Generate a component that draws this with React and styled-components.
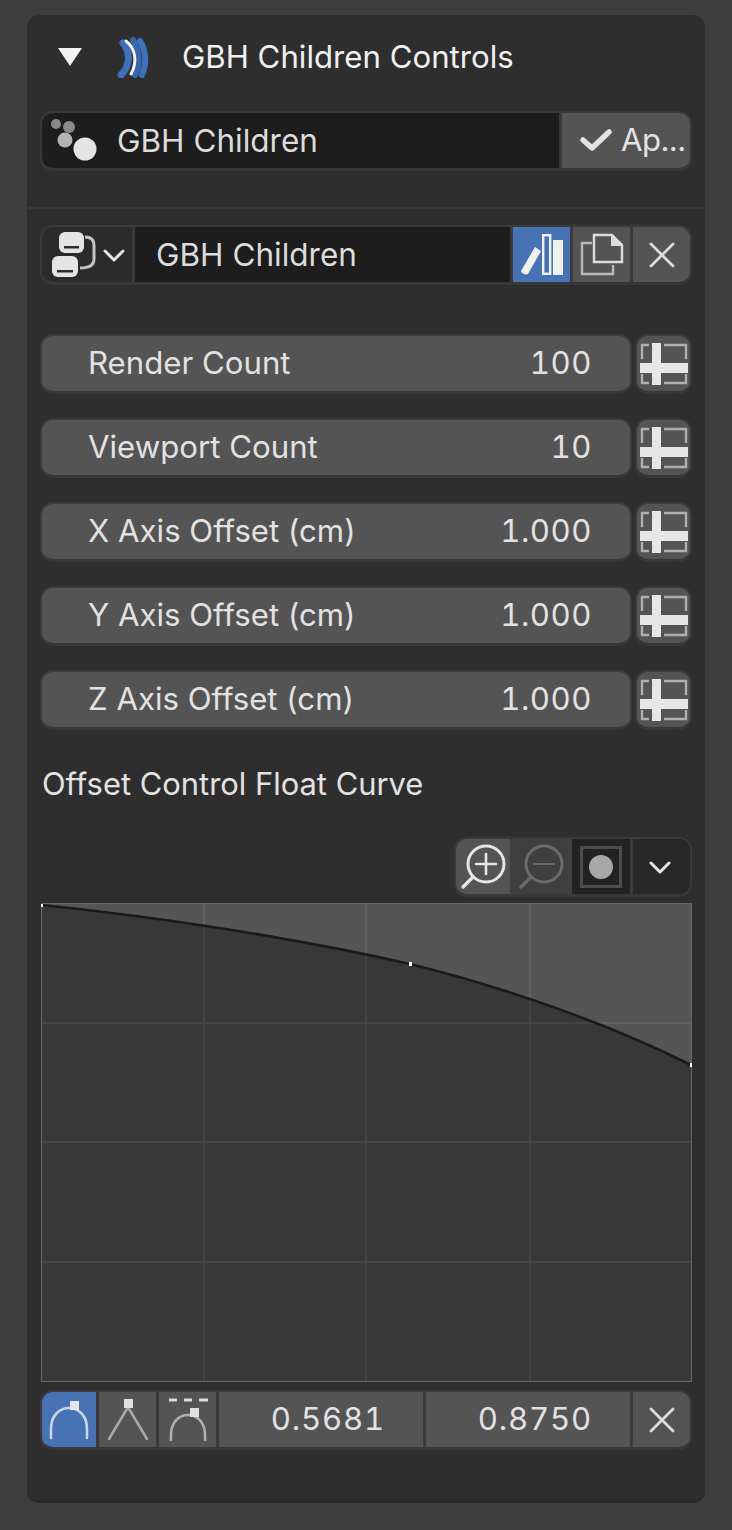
import React from "react";
import styled, { createGlobalStyle } from "styled-components";

const GlobalStyle = createGlobalStyle`
  html, body { margin: 0; padding: 0; background: #3d3d3d; }
  body { width: 732px; height: 1530px; overflow: hidden; font-family: Inter, "Liberation Sans", sans-serif; }
`;

const Page = styled.div`
  width: 732px;
  height: 1530px;
  padding: 15px 27px 0;
  box-sizing: border-box;
`;

const Panel = styled.div`
  width: 678px;
  height: 1488px;
  box-sizing: border-box;
  background: #2e2e2e;
  border-radius: 12px;
  border-bottom: 3px solid #292929;
`;

const Header = styled.div`
  height: 96px;
  display: flex;
  align-items: center;
  padding: 0 0 12px 29px;
  box-sizing: border-box;
  color: #f0f0f0;
  font-size: 31.2px;
`;

const LogoSlot = styled.span`
  display: flex;
  margin-left: 32px;
`;

const HeaderTitle = styled.span`
  margin-left: 32px;
`;

const Section = styled.div`
  padding: 0 13px;
`;

const FieldRow = styled.div`
  display: flex;
  height: 60px;
  gap: 3px;
  box-sizing: border-box;
  background: #3a3a3a;
  border: 2px solid #3a3a3a;
  border-bottom: 3px solid #383838;
  border-radius: 13px;
  overflow: hidden;
`;

const TextField = styled.div`
  flex: 1;
  display: flex;
  align-items: center;
  gap: ${({ $gap }) => $gap ?? 0}px;
  background: #1d1d1d;
  color: #dcdcdc;
  font-size: 31.5px;
  padding: 0 0 1px ${({ $pad }) => $pad}px;
  box-sizing: border-box;
`;

const ApplyButton = styled.div`
  width: 128px;
  display: flex;
  align-items: center;
  gap: 9px;
  padding: 0 0 1px 18px;
  box-sizing: border-box;
  background: #545454;
  color: #e2e2e2;
  font-size: 31.2px;
  letter-spacing: -0.6px;
`;

const Divider = styled.div`
  height: 2px;
  background: #3a3a3a;
  margin: 36px 0 16px;
`;

const SelectorButton = styled.div`
  width: 90px;
  display: flex;
  align-items: center;
  padding-left: 10px;
  gap: 5px;
  box-sizing: border-box;
  background: #2b2b2b;
`;

const IconButton = styled.div`
  width: ${({ $w }) => $w ?? 57}px;
  display: flex;
  align-items: center;
  justify-content: center;
  box-sizing: border-box;
  background: ${({ $active }) => ($active ? "#4772b3" : "#545454")};
`;

const Sliders = styled.div`
  display: flex;
  flex-direction: column;
  gap: 24px;
  margin-top: 49px;
`;

const SliderRow = styled.div`
  display: flex;
  height: 60px;
  gap: 3px;
`;

const Slider = styled.div`
  flex: 1;
  display: flex;
  align-items: center;
  justify-content: space-between;
  padding: 0 38px 2px 46px;
  box-sizing: border-box;
  background: #545454;
  color: #e2e2e2;
  font-size: 31.2px;
  border: 2px solid #3a3a3a;
  border-bottom: 3px solid #383838;
  border-radius: 13px;
`;

const SliderValue = styled.span`
  font-variant-numeric: tabular-nums;
  letter-spacing: 0.5px;
`;

const DecoButton = styled.div`
  width: 57px;
  display: flex;
  align-items: center;
  justify-content: center;
  box-sizing: border-box;
  background: #545454;
  border: 2px solid #3a3a3a;
  border-bottom: 3px solid #383838;
  border-radius: 13px;
`;

const CurveLabel = styled.div`
  margin-top: 35px;
  padding-left: 2px;
  height: 37px;
  line-height: 37px;
  color: #e2e2e2;
  font-size: 30.9px;
`;

const CurveToolbar = styled.div`
  display: flex;
  justify-content: flex-end;
  margin-top: 35px;
`;

const ToolGroup = styled.div`
  display: flex;
  height: 60px;
  width: 238px;
  box-sizing: border-box;
  border: 2px solid #3a3a3a;
  border-bottom: 3px solid #383838;
  border-radius: 13px;
  overflow: hidden;
  background: #2a2a2a;
`;

const ToolButton = styled.div`
  flex: ${({ $w }) => `0 0 ${$w}px`};
  display: flex;
  align-items: center;
  justify-content: center;
  box-sizing: border-box;
  background: ${({ $bg }) => $bg};
  ${({ $split }) => $split && "border-left: 3px solid #3a3a3a; padding-right: 3px;"}
`;

const CurveBox = styled.div`
  margin: 6px 0 0 1px;
  width: 651px;
  height: 479px;
  line-height: 0;
`;

const BottomRow = styled(FieldRow)`
  margin-top: 8px;
`;

const NumberField = styled.div`
  width: 204px;
  display: flex;
  align-items: center;
  justify-content: center;
  padding: 0 0 1px 14px;
  box-sizing: border-box;
  background: #545454;
  color: #e2e2e2;
  font-size: 31.2px;
  font-variant-numeric: tabular-nums;
  letter-spacing: 0.8px;
`;

const ArrowDown = () => (
  <svg width="28" height="24" viewBox="0 0 28 24">
    <path d="M2 3h24L14 21z" fill="#f2f2f2" />
  </svg>
);

const AddonLogo = () => (
  <svg width="34" height="42" viewBox="0 0 34 42" fill="none" strokeLinecap="round">
    <path d="M24 5c6 9 7 23 2 34" stroke="#3f70b8" strokeWidth="6" />
    <path d="M17 4c6 9 8 24 2 35" stroke="#3668ae" strokeWidth="6" />
    <path d="M7 7c7 8 8 22 -2 32" stroke="#3f70b8" strokeWidth="7" />
    <path d="M10 5c9 7 12 20 5 33" stroke="#f2f2f2" strokeWidth="3" />
  </svg>
);

const ParticlesIcon = () => (
  <svg width="46" height="42" viewBox="0 0 46 42">
    <circle cx="5" cy="5" r="5" fill="#8a8a8a" />
    <circle cx="18" cy="8" r="6" fill="#8a8a8a" />
    <circle cx="14" cy="21" r="7.5" fill="#b4b4b4" />
    <circle cx="34" cy="30" r="11.5" fill="#e4e4e4" />
  </svg>
);

const CheckIcon = () => (
  <svg width="32" height="24" viewBox="0 0 32 24" fill="none">
    <path d="M3 12l9 8L29 4" stroke="#e2e2e2" strokeWidth="5.5" strokeLinecap="round" strokeLinejoin="round" />
  </svg>
);

const NodeTreeIcon = () => (
  <svg width="46" height="46" viewBox="0 0 46 46" fill="none">
    <rect x="7" y="0" width="25" height="21" rx="6" fill="#e4e4e4" />
    <rect x="12" y="14" width="15" height="2.5" fill="#2b2b2b" />
    <rect x="0" y="24" width="26" height="21" rx="6" fill="#e4e4e4" />
    <rect x="5" y="38" width="16" height="2.5" fill="#2b2b2b" />
    <path d="M33 5c6 0 9 3 9 8v14c0 6-4 9-14 9" stroke="#c4c4c4" strokeWidth="3" />
  </svg>
);

const Chevron = ({ color = "#e2e2e2" }) => (
  <svg width="22" height="14" viewBox="0 0 22 14" fill="none">
    <path d="M2 3l9 9 9-9" stroke={color} strokeWidth="3" strokeLinecap="round" strokeLinejoin="round" />
  </svg>
);

const BooksIcon = () => (
  <svg width="44" height="42" viewBox="0 0 44 42">
    <path d="M1 37L15 13l6 4-13 23c-2 1-6 0-7-3z" fill="#f0f0f0" />
    <rect x="23.2" y="1.2" width="7" height="38.6" fill="none" stroke="#f0f0f0" strokeWidth="2.4" />
    <rect x="33" y="6" width="10" height="35" fill="#f0f0f0" />
  </svg>
);

const CopyIcon = () => (
  <svg width="44" height="44" viewBox="0 0 44 44" fill="none" stroke="#b8b8b8" strokeWidth="2.4">
    <path d="M12 10H2v31h31v-9" />
    <path d="M14 29V2h18l10 10v17z" stroke="#dcdcdc" />
    <path d="M31 1l12 12H31z" fill="#dcdcdc" stroke="none" />
  </svg>
);

const CloseIcon = () => (
  <svg width="26" height="26" viewBox="0 0 26 26" fill="none">
    <path d="M2 2l22 22M24 2L2 24" stroke="#dcdcdc" strokeWidth="2.8" strokeLinecap="round" />
  </svg>
);

const DecoIcon = () => (
  <svg width="48" height="42" viewBox="0 0 48 42" fill="none">
    <path d="M9 2H2v14M2 31v9h7M24 2h22v14M46 31v9H24" stroke="#b0b0b0" strokeWidth="2.4" />
    <rect x="12" y="0" width="9" height="42" fill="#e6e6e6" />
    <rect x="0" y="20" width="48" height="10" fill="#e6e6e6" />
  </svg>
);

const ZoomIcon = ({ color, plus }) => (
  <svg width="46" height="46" viewBox="0 0 46 46" fill="none" stroke={color} strokeLinecap="round">
    <circle cx="26" cy="20" r="18" strokeWidth="3" />
    <path d="M13 33L3 43" strokeWidth="3.4" />
    <path d="M16 20h20" strokeWidth={plus ? 2.6 : 2.2} />
    {plus && <path d="M26 10v20" strokeWidth="2.6" />}
  </svg>
);

const ClipIcon = () => (
  <svg width="42" height="42" viewBox="0 0 42 42" fill="none">
    <rect x="1.5" y="1.5" width="39" height="39" stroke="#4c4c4c" strokeWidth="3" />
    <circle cx="21" cy="21" r="12" fill="#a8a8a8" />
  </svg>
);

const HandleAuto = ({ color = "#c9d6ea" }) => (
  <svg width="42" height="44" viewBox="0 0 42 44" fill="none">
    <path d="M3 40V31C3 17 12 10 21 10s18 7 18 21v9" stroke={color} strokeWidth="2.6" strokeLinecap="round" />
    <rect x="22" y="3" width="9" height="9" fill="#e6e6e6" />
  </svg>
);

const HandleVector = () => (
  <svg width="42" height="44" viewBox="0 0 42 44" fill="none">
    <path d="M2 41L21 9l19 32" stroke="#a8a8a8" strokeWidth="2.6" strokeLinecap="round" />
    <rect x="17" y="1" width="9" height="9" fill="#e0e0e0" />
  </svg>
);

const HandleAligned = () => (
  <svg width="42" height="44" viewBox="0 0 42 44" fill="none">
    <path d="M2 2h8M17 2h8M32 2h9" stroke="#dcdcdc" strokeWidth="3" />
    <path d="M4 42v-5C4 24 12 17 21 17s17 7 17 20v5" stroke="#b0b0b0" strokeWidth="2.6" strokeLinecap="round" />
    <rect x="23" y="10" width="9" height="9" fill="#e0e0e0" />
  </svg>
);

// curve in local canvas coordinates (651 x 479)
const curvePath = "M0 2C110 13 250 34 369 61C470 86 570 122 650 162";

const CurveChart = () => {
  const xs = [163, 325, 489];
  const ys = [120, 239, 359];
  return (
    <svg width="651" height="479" viewBox="0 0 651 479">
      <defs>
        <clipPath id="above">
          <path d={`${curvePath}V0H0z`} />
        </clipPath>
      </defs>
      <rect width="651" height="479" fill="#383838" />
      <g stroke="#444444" strokeWidth="2">
        {xs.map((x) => <line key={x} x1={x} x2={x} y1="0" y2="479" />)}
        {ys.map((y) => <line key={y} x1="0" x2="651" y1={y} y2={y} />)}
      </g>
      <g clipPath="url(#above)">
        <rect width="651" height="479" fill="#555555" />
        <g stroke="#636363" strokeWidth="2">
          {xs.map((x) => <line key={x} x1={x} x2={x} y1="0" y2="479" />)}
          {ys.map((y) => <line key={y} x1="0" x2="651" y1={y} y2={y} />)}
        </g>
      </g>
      <rect x="0.5" y="0.5" width="650" height="478" fill="none" stroke="#666666" strokeWidth="1.2" />
      <path d={curvePath} fill="none" stroke="#1a1a1a" strokeWidth="2.6" />
      <rect x="368" y="59" width="3" height="4" fill="#ffffff" />
      <rect x="649" y="160" width="2" height="4" fill="#ffffff" />
      <rect x="0" y="1" width="2" height="3" fill="#ffffff" />
    </svg>
  );
};

const sliders = [
  ["Render Count", "100"],
  ["Viewport Count", "10"],
  ["X Axis Offset (cm)", "1.000"],
  ["Y Axis Offset (cm)", "1.000"],
  ["Z Axis Offset (cm)", "1.000"],
];

export default function App() {
  return (
    <Page>
      <GlobalStyle />
      <Panel>
        <Header>
          <ArrowDown />
          <LogoSlot><AddonLogo /></LogoSlot>
          <HeaderTitle>GBH Children Controls</HeaderTitle>
        </Header>
        <Section>
          <FieldRow>
            <TextField $pad={9} $gap={20}>
              <ParticlesIcon />
              GBH Children
            </TextField>
            <ApplyButton>
              <CheckIcon />
              Ap...
            </ApplyButton>
          </FieldRow>
        </Section>
        <Divider />
        <Section>
          <FieldRow>
            <SelectorButton>
              <NodeTreeIcon />
              <Chevron />
            </SelectorButton>
            <TextField $pad={21}>GBH Children</TextField>
            <IconButton $active><BooksIcon /></IconButton>
            <IconButton><CopyIcon /></IconButton>
            <IconButton><CloseIcon /></IconButton>
          </FieldRow>
          <Sliders>
            {sliders.map(([label, value]) => (
              <SliderRow key={label}>
                <Slider>
                  <span>{label}</span>
                  <SliderValue>{value}</SliderValue>
                </Slider>
                <DecoButton><DecoIcon /></DecoButton>
              </SliderRow>
            ))}
          </Sliders>
          <CurveLabel>Offset Control Float Curve</CurveLabel>
          <CurveToolbar>
            <ToolGroup>
              <ToolButton $w={54} $bg="#545454"><ZoomIcon color="#e6e6e6" plus /></ToolButton>
              <ToolButton $w={62} $bg="#3f3f3f"><ZoomIcon color="#6a6a6a" /></ToolButton>
              <ToolButton $w={58} $bg="#222222"><ClipIcon /></ToolButton>
              <ToolButton $w={60} $bg="#282828" $split><Chevron /></ToolButton>
            </ToolGroup>
          </CurveToolbar>
          <CurveBox><CurveChart /></CurveBox>
          <BottomRow>
            <IconButton $active $w={54}><HandleAuto /></IconButton>
            <IconButton><HandleVector /></IconButton>
            <IconButton><HandleAligned /></IconButton>
            <NumberField>0.5681</NumberField>
            <NumberField>0.8750</NumberField>
            <IconButton><CloseIcon /></IconButton>
          </BottomRow>
        </Section>
      </Panel>
    </Page>
  );
}
